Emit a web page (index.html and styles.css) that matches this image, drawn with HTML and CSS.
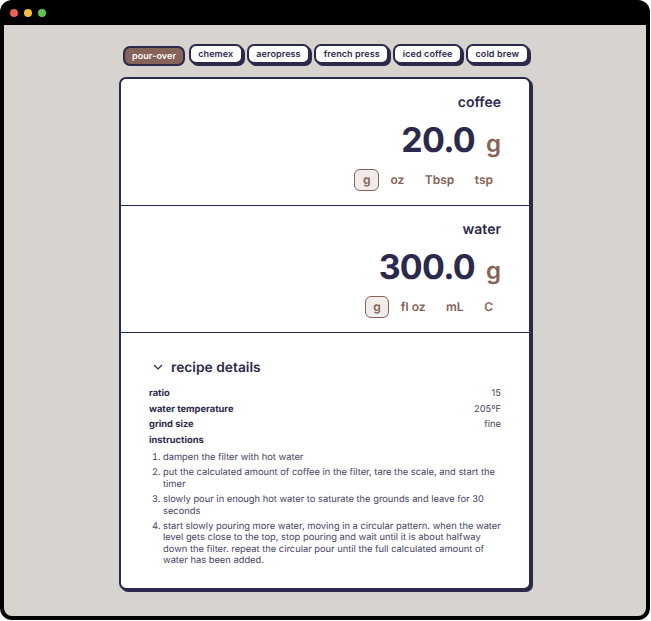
FILE: index.html
```html
<!DOCTYPE html>
<html lang="en">
<head>
<meta charset="utf-8">
<title>coffee calculator</title>
<link rel="stylesheet" href="styles.css">
</head>
<body>
<div class="window">
  <div class="titlebar">
    <span class="dot red"></span><span class="dot yellow"></span><span class="dot green"></span>
  </div>
  <main class="content">
    <nav class="tabs">
      <button class="tab active">pour-over</button>
      <button class="tab">chemex</button>
      <button class="tab">aeropress</button>
      <button class="tab">french press</button>
      <button class="tab">iced coffee</button>
      <button class="tab">cold brew</button>
    </nav>
    <section class="card">
      <div class="measure">
        <h2 class="label">coffee</h2>
        <div class="amount"><span class="value">20.0</span><span class="unit">g</span></div>
        <div class="units">
          <span class="opt sel">g</span><span class="opt">oz</span><span class="opt">Tbsp</span><span class="opt">tsp</span>
        </div>
      </div>
      <div class="measure">
        <h2 class="label">water</h2>
        <div class="amount"><span class="value">300.0</span><span class="unit">g</span></div>
        <div class="units">
          <span class="opt sel">g</span><span class="opt">fl oz</span><span class="opt">mL</span><span class="opt">C</span>
        </div>
      </div>
      <div class="details">
        <h3 class="details-title">
          <svg class="chev" width="10" height="6" viewBox="0 0 10 6"><path d="M1 1l4 4 4-4" fill="none" stroke="#2b2a4c" stroke-width="1.2"/></svg>
          recipe details
        </h3>
        <div class="row"><b>ratio</b><span>15</span></div>
        <div class="row"><b>water temperature</b><span>205ºF</span></div>
        <div class="row"><b>grind size</b><span>fine</span></div>
        <div class="row"><b>instructions</b></div>
        <ol class="steps">
          <li>dampen the filter with hot water</li>
          <li>put the calculated amount of coffee in the filter, tare the scale, and start the timer</li>
          <li>slowly pour in enough hot water to saturate the grounds and leave for 30 seconds</li>
          <li>start slowly pouring more water, moving in a circular pattern. when the water level gets close to the top, stop pouring and wait until it is about halfway down the filter. repeat the circular pour until the full calculated amount of water has been added.</li>
        </ol>
      </div>
    </section>
  </main>
</div>
</body>
</html>
```
FILE: styles.css
```css
* { box-sizing: border-box; }
html, body { margin: 0; height: 100%; background: #fff; }
body { font-family: Inter, "Liberation Sans", sans-serif; color: #2b2a4c; overflow: hidden; text-rendering: geometricPrecision; }
.window {
  width: 650px; height: 620px; background: #000; border-radius: 12px;
  padding: 0 4px 4px 4px; display: flex; flex-direction: column; overflow: hidden;
}
.titlebar { height: 25px; flex: none; display: flex; align-items: center; gap: 6px; padding: 0 0 0 6px; }
.dot { width: 8px; height: 8px; border-radius: 50%; }
.red { background: #ed5f57; }
.yellow { background: #f8bd42; }
.green { background: #5fc84d; }
.content { flex: 1; background: #d7d4cf; border-radius: 0 0 8px 8px; display: flex; flex-direction: column; align-items: center; padding-top: 19px; }
.tabs { display: flex; gap: 4px; align-items: flex-start; height: 33px; margin-left: 2px; }
.tab {
  font: 600 9px/1 Inter, sans-serif; color: #2b2a4c; background: #fff; text-rendering: geometricPrecision;
  border: 2px solid #2b2a4c; border-radius: 7px; height: 20px; padding: 1.5px 7.5px 0;
  box-shadow: 2px 2px 0 #2b2a4c; letter-spacing: 0.1px;
}
.tab.active { background: #856358; color: #fff; margin-top: 2px; box-shadow: none; padding: 1.5px 6.5px 0; }
.card {
  width: 412px; height: 513px; background: #fff; border: 2px solid #2b2a4c; border-radius: 7px;
  box-shadow: 2px 2px 0 #2b2a4c;
}
.measure { height: 127px; border-bottom: 1px solid #2b2a4c; padding: 15px 28px 0; display: flex; flex-direction: column; align-items: flex-end; }
.label { margin: 0; font-size: 14px; line-height: 17px; font-weight: 600; }
.amount { display: flex; align-items: baseline; margin-top: 10px; height: 40px; }
.value { font-size: 34px; line-height: 40px; font-weight: 700; letter-spacing: -0.75px; }
.unit { font-size: 24px; font-weight: 600; color: #856358; margin-left: 11px; }
.units { display: flex; align-items: center; margin-top: 8px; margin-right: -1px; }
.opt { font-size: 12px; font-weight: 600; color: #856358; padding: 0 8px; height: 22px; line-height: 20px; border: 1px solid transparent; border-radius: 6px; margin-left: 2.5px; }
.sel { background: #f1ece9; border-color: #856358; padding: 0 7.5px; }
.details { padding: 27px 28px 0; font-size: 9.33px; }
.details-title { display: flex; align-items: center; gap: 8px; margin: 0 0 9px 4px; font-size: 13.8px; line-height: 17px; font-weight: 600; }
.chev { margin-top: -3px; }
.row { display: flex; justify-content: space-between; line-height: 15.7px; color: #45445f; }
.row b { font-weight: 700; color: #2b2a4c; }
.steps { margin: -0.4px 0 0; padding: 0 0 0 14px; line-height: 11.5px; color: #45445f; }
.steps li { margin-top: 3.75px; }
```
